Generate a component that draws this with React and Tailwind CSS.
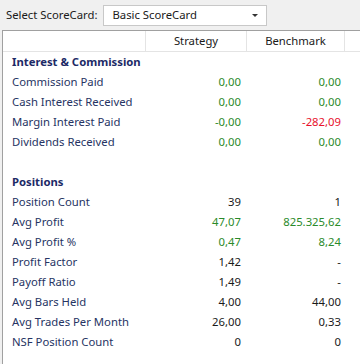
import React from 'react'

const green = 'text-[#2a8a2a]'
const red = 'text-[#e8102c]'
const black = 'text-[#1a1a1a]'

const sections = [
    {
        title: 'Interest & Commission',
        rows: [
            ['Commission Paid', '0,00', green, '0,00', green],
            ['Cash Interest Received', '0,00', green, '0,00', green],
            ['Margin Interest Paid', '-0,00', green, '-282,09', red],
            ['Dividends Received', '0,00', green, '0,00', green],
        ],
    },
    {
        title: 'Positions',
        rows: [
            ['Position Count', '39', black, '1', black],
            ['Avg Profit', '47,07', green, '825.325,62', green],
            ['Avg Profit %', '0,47', green, '8,24', green],
            ['Profit Factor', '1,42', black, '-', black],
            ['Payoff Ratio', '1,49', black, '-', black],
            ['Avg Bars Held', '4,00', black, '44,00', black],
            ['Avg Trades Per Month', '26,00', black, '0,33', black],
            ['NSF Position Count', '0', black, '0', black],
        ],
    },
]

function Row({ row }) {
    const [label, s, sc, b, bc] = row
    return (
        <div className="grid grid-cols-[143px_101px_98px_1fr] h-[20px] items-center">
            <div className="pl-[9px] text-[#263463]">{label}</div>
            <div className={`text-right pr-[6px] ${sc}`}>{s}</div>
            <div className={`text-right pr-[4px] ${bc}`}>{b}</div>
            <div></div>
        </div>
    )
}

export default function App() {
    return (
        <div className="w-[360px] h-[364px] bg-[#f0f0f0] overflow-hidden text-[11.3px] font-['Noto_Sans',sans-serif] leading-none">
            <div className="h-[30px] flex items-center pl-[6px] gap-[6px] text-[#1a1a1a]">
                <span>Select ScoreCard:</span>
                <div className="w-[164px] h-[21px] bg-white border border-[#c8c8c8] flex items-center justify-between pl-[8px] pr-[8px]">
                    <span>Basic ScoreCard</span>
                    <span className="w-0 h-0 border-l-[3px] border-r-[3px] border-t-[3px] border-l-transparent border-r-transparent border-t-[#333]"></span>
                </div>
            </div>
            <div className="ml-[2px] h-[334px] bg-white border-l border-t border-[#a0a0a0]">
                <div className="grid grid-cols-[143px_101px_98px_1fr] h-[21px] border-b border-[#e4e4e4] text-[#1a1a1a]">
                    <div className="border-r border-[#e4e4e4]"></div>
                    <div className="border-r border-[#e4e4e4] flex items-center justify-center">Strategy</div>
                    <div className="border-r border-[#e4e4e4] flex items-center justify-center">Benchmark</div>
                    <div></div>
                </div>
                {sections.map((sec, i) => (
                    <div key={sec.title} className={i > 0 ? 'pt-[20px]' : ''}>
                        <div className="h-[20px] flex items-center pl-[9px] font-bold text-[#1c2a66]">{sec.title}</div>
                        {sec.rows.map((r) => (
                            <Row key={r[0]} row={r} />
                        ))}
                    </div>
                ))}
            </div>
        </div>
    )
}
